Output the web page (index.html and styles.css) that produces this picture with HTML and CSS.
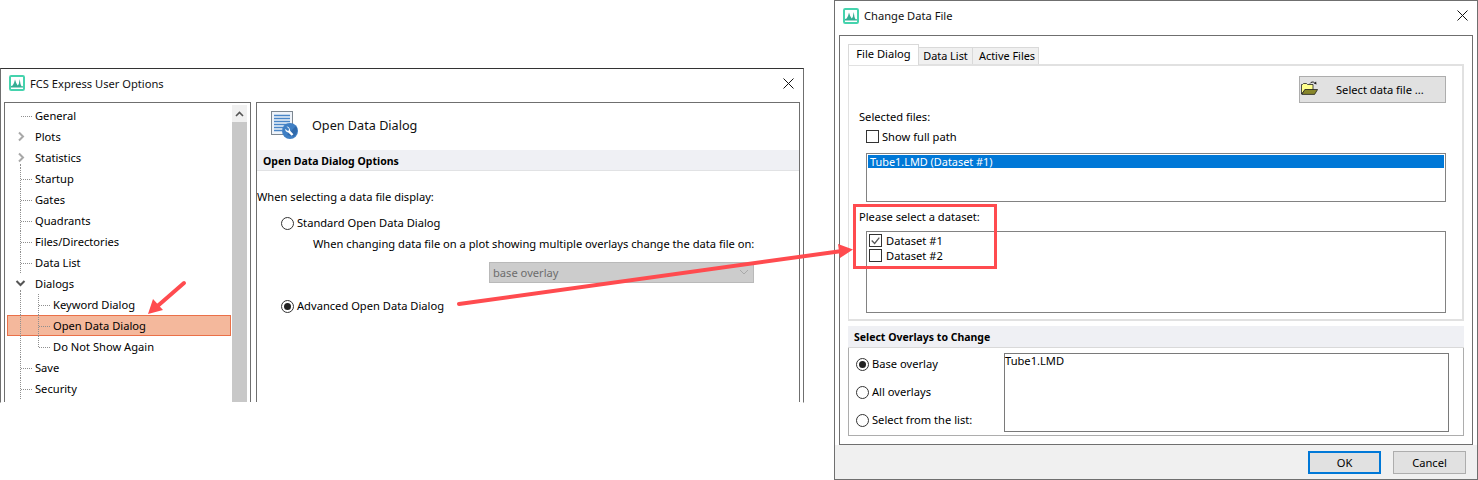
FILE: index.html
```html
<!DOCTYPE html>
<html lang="en">
<head>
<meta charset="utf-8">
<title>FCS Express dialogs</title>
<link rel="stylesheet" href="styles.css">
</head>
<body>
<div class="stage">
  <section class="window options-window">
    <header class="titlebar">
      <svg class="logo" viewBox="0 0 16 16"><rect x="1" y="1" width="14" height="14" rx="1.2" fill="#fff" stroke="#45d3ad" stroke-width="2"/><path d="M2 12.500h12v-1.300h-1.500L11.500 9 10.700 4 9.800 9 8.700 10.500 7.200 8 6 4.500 5 8 3.600 10.500 2 11z" fill="#35ad93"/></svg>
      <span class="title">FCS Express User Options</span>
      <svg class="close" viewBox="0 0 11 11"><path d="M.5.5l10 10M10.500.5l-10 10" stroke="#111" fill="none"/></svg>
    </header>
    <div class="options-body">
      <nav class="tree">
        <ul class="tree-list">
          <li class="row"><i class="v v-lower"></i><i class="h"></i><span>General</span></li>
          <li class="row"><svg class="exp" viewBox="0 0 9 11"><path d="M2 1.500l4 4-4 4" stroke="#a8a8a8" stroke-width="2" fill="none"/></svg><span>Plots</span></li>
          <li class="row"><svg class="exp" viewBox="0 0 9 11"><path d="M2 1.500l4 4-4 4" stroke="#a8a8a8" stroke-width="2" fill="none"/></svg><i class="v v-stat"></i><span>Statistics</span></li>
          <li class="row"><i class="v"></i><i class="h"></i><span>Startup</span></li>
          <li class="row"><i class="v"></i><i class="h"></i><span>Gates</span></li>
          <li class="row"><i class="v"></i><i class="h"></i><span>Quadrants</span></li>
          <li class="row"><i class="v"></i><i class="h"></i><span>Files/Directories</span></li>
          <li class="row"><i class="v v-last"></i><i class="h"></i><span>Data List</span></li>
          <li class="row"><svg class="exp exp-open" viewBox="0 0 11 9"><path d="M1.500 2l4 4 4-4" stroke="#555" stroke-width="2" fill="none"/></svg><i class="v v-dial"></i><span>Dialogs</span></li>
          <li class="row child"><i class="v"></i><i class="v2 v2-top"></i><i class="h h2"></i><span>Keyword Dialog</span></li>
          <li class="row child selected"><i class="v"></i><i class="v2"></i><i class="h h2"></i><span>Open Data Dialog</span></li>
          <li class="row child"><i class="v"></i><i class="v2 v2-end"></i><i class="h h2"></i><span>Do Not Show Again</span></li>
          <li class="row"><i class="v"></i><i class="h"></i><span>Save</span></li>
          <li class="row"><i class="v"></i><i class="h"></i><span>Security</span></li>
        </ul>
        <div class="scrollbar">
          <div class="scroll-btn"><svg viewBox="0 0 9 6" class="scroll-up"><path d="M1 5l3.500-3.500L8 5" stroke="#555" stroke-width="1.600" fill="none"/></svg></div>
        </div>
      </nav>
      <main class="panel">
        <div class="panel-head">
          <svg class="doc-icon" viewBox="0 0 27 28">
            <rect x="0.5" y="0.5" width="21" height="23" fill="#eef3fa" stroke="#7d8791"/>
            <path d="M3 4.500h16M3 7.500h16M3 10.500h16M3 13.500h16M3 16.500h10M3 19.500h8" stroke="#4a86c8" stroke-width="1.600"/>
            <circle cx="19" cy="20" r="8" fill="#3f7fc4"/>
            <path d="M23 25.500A8 8 0 0 0 25 15L16 24z" fill="#2f69ab"/>
            <path d="M15.500 15.500l2.300 2 .2 2-1.700 .3-2-2c-.3 2 1 3.600 3 3.700l3.400 3.300 1.700-1.600-3.300-3.400c.2-2.300-1.600-4.300-3.600-4.300z" fill="#fff"/>
          </svg>
          <span class="panel-title">Open Data Dialog</span>
        </div>
        <h2 class="section-bar">Open Data Dialog Options</h2>
        <p class="lead">When selecting a data file display:</p>
        <label class="radio-line std"><i class="radio"></i>Standard Open Data Dialog</label>
        <p class="sub">When changing data file on a plot showing multiple overlays change the data file on:</p>
        <div class="combo"><span>base overlay</span><svg class="combo-arrow" viewBox="0 0 10 6"><path d="M1 1l4 4 4-4" stroke="#a9a9a9" fill="none"/></svg></div>
        <label class="radio-line adv"><i class="radio on"></i>Advanced Open Data Dialog</label>
      </main>
    </div>
  </section>

  <section class="window change-window">
    <header class="titlebar titlebar-b">
      <svg class="logo" viewBox="0 0 16 16"><rect x="1" y="1" width="14" height="14" rx="1.2" fill="#fff" stroke="#45d3ad" stroke-width="2"/><path d="M2 12.500h12v-1.300h-1.500L11.500 9 10.700 4 9.800 9 8.700 10.500 7.200 8 6 4.500 5 8 3.600 10.500 2 11z" fill="#35ad93"/></svg>
      <span class="title">Change Data File</span>
      <svg class="close" viewBox="0 0 11 11"><path d="M.5.5l10 10M10.500.5l-10 10" stroke="#111" fill="none"/></svg>
    </header>
    <div class="main-box">
      <div class="tabs">
        <span class="tab active">File Dialog</span>
        <span class="tab">Data List</span>
        <span class="tab">Active Files</span>
      </div>
      <div class="tab-pane">
        <div class="btn-row">
          <button class="file-btn" type="button">
            <svg class="folder" viewBox="0 0 17 14"><path d="M.5 13V3.500h1l1-1h3l1 1h5.500v5.500H4L.5 13z" fill="#ffff8c" stroke="#222" stroke-width=".8"/><path d="M.8 13.400l3-4.900h12.800l-3 4.900z" fill="#87862a" stroke="#222" stroke-width=".8"/><path d="M9 2.500c1-1.600 3-2 4.600-.8" stroke="#222" fill="none"/><path d="M15.500 3.500l-.4-3-2.300 2z" fill="#222"/></svg>
            <span>Select data file ...</span>
          </button>
        </div>
        <p class="pane-label selected-label">Selected files:</p>
        <label class="check-line path-line"><i class="check"></i>Show full path</label>
        <div class="listbox files"><div class="list-sel">Tube1.LMD (Dataset #1)</div></div>
        <p class="pane-label dataset-label">Please select a dataset:</p>
        <div class="listbox datasets">
          <label class="check-line ds"><i class="check"><svg viewBox="0 0 13 13"><path d="M2 6.500l3.500 3.500 5.500-7" stroke="#555" stroke-width="1.500" fill="none"/></svg></i>Dataset #1</label>
          <label class="check-line ds"><i class="check"></i>Dataset #2</label>
        </div>
      </div>
      <h2 class="section-bar overlay-bar">Select Overlays to Change</h2>
      <div class="overlay-box">
        <div class="overlay-radios">
          <label class="radio-line"><i class="radio on"></i>Base overlay</label>
          <label class="radio-line"><i class="radio"></i>All overlays</label>
          <label class="radio-line"><i class="radio"></i>Select from the list:</label>
        </div>
        <div class="overlay-list">Tube1.LMD</div>
      </div>
    </div>
    <footer class="footer">
      <button class="dlg-btn default" type="button">OK</button>
      <button class="dlg-btn" type="button">Cancel</button>
    </footer>
  </section>

  <div class="red-box"></div>
  <svg class="arrows" viewBox="0 0 1478 480">
    <path d="M459 304L842 251" stroke="#ff4b4f" stroke-width="4" stroke-linecap="round" fill="none"/>
    <path d="M838 244L853 249.500 840 258z" fill="#ff4b4f"/>
    <path d="M184 283L153 310" stroke="#ff4b4f" stroke-width="4" stroke-linecap="round" fill="none"/>
    <path d="M148 314L153 299 163 310z" fill="#ff4b4f"/>
  </svg>
</div>
</body>
</html>
```
FILE: styles.css
```css
* { box-sizing: border-box; }
html, body { margin: 0; padding: 0; background: #fff; }
body { font-family: "Noto Sans", "Open Sans", sans-serif; font-size: 11.15px; color: #000; }
p, h2, ul { margin: 0; padding: 0; }
ul { list-style: none; }
i { font-style: normal; }

.stage { position: relative; width: 1478px; height: 480px; overflow: hidden; }

.window { position: absolute; background: #fff; display: flex; flex-direction: column; border: 1px solid #6f6f6f; }
.options-window { left: 0; top: 68px; width: 804px; height: 335px; border-top-color: #333; border-bottom: 1px solid #fff; overflow: hidden; }
.change-window { left: 834px; top: 0; width: 644px; height: 480px; }

.titlebar { height: 33px; flex: none; display: flex; align-items: center; padding: 0 0 5px 8px; }
.titlebar-b { height: 34px; padding-bottom: 5px; }
.logo { width: 16px; height: 16px; flex: none; margin-right: 5px; }
.title { font-size: 11.15px; flex: 1; color: #111; line-height: 16px; padding-top: 1px; }
.close { width: 11px; height: 11px; margin-right: 9px; flex: none; }

.options-body { flex: 1; min-height: 0; display: flex; gap: 5px; padding-left: 3px; padding-right: 3px; }
.tree { width: 247px; height: 320px; flex: none; border: 1px solid #6f6f6f; padding: 2px 2px 0 2px; display: flex; }
.tree-list { width: 225px; flex: none; }
.row { position: relative; height: 21px; line-height: 22px; padding-left: 28px; white-space: nowrap; }
.row.child { padding-left: 46px; }
.row span { position: relative; }
.row.selected { background: #f4b89c; outline: 1px solid #ea7048; outline-offset: -1px; width: 224px; }
.v { position: absolute; left: 13px; top: 0; bottom: 0; border-left: 1px dotted #8f8f8f; }
.v-lower { top: 11px; bottom: 10px; }
.v-stat { top: 17px; bottom: 0; }
.v-dial { top: 17px; bottom: 0; }
.v-last { bottom: 0; }
.h { position: absolute; left: 14px; width: 11px; top: 11px; border-top: 1px dotted #8f8f8f; }
.h2 { left: 32px; }
.v2 { position: absolute; left: 31px; top: 0; bottom: 0; border-left: 1px dotted #8f8f8f; }
.v2-top { top: 0; }
.v2-end { bottom: 10px; }
.exp { position: absolute; left: 10px; top: 5px; width: 9px; height: 11px; }
.exp-open { left: 8px; top: 6px; width: 11px; height: 9px; }

.scrollbar { width: 15px; flex: none; background: #c8c8c8; }
.scroll-btn { height: 17px; background: #f0f0f0; display: flex; align-items: center; justify-content: center; }
.scroll-up { width: 9px; height: 6px; }

.panel { width: 544px; flex: none; height: 320px; border: 1px solid #6f6f6f; }
.panel-head { height: 47px; display: flex; align-items: center; padding: 0 0 4px 14px; }
.doc-icon { width: 27px; height: 28px; margin-right: 14px; flex: none; }
.panel-title { font-size: 12.65px; color: #111; }
.section-bar { height: 21px; line-height: 22px; background: #eff0f4; border-bottom: 1px solid #e1e2e4; font-size: 10.5px; font-weight: 700; padding-left: 6px; }
.lead { margin-top: 17px; line-height: 18px; }
.radio-line { display: flex; align-items: center; line-height: 16px; }
.radio { width: 13px; height: 13px; border: 1px solid #333; border-radius: 50%; flex: none; margin-right: 3px; background: #fff; display: flex; align-items: center; justify-content: center; }
.radio.on::after { content: ""; width: 7px; height: 7px; border-radius: 50%; background: #222; }
.std { margin: 9px 0 0 24px; }
.sub { margin: 5px 0 0 56px; line-height: 16px; white-space: nowrap; }
.combo { margin: 10px 0 0 232px; width: 265px; height: 21px; background: #ccc; border: 1px solid #b9b9b9; color: #6d6d6d; display: flex; align-items: center; justify-content: space-between; padding: 0 4px 1px 3px; }
.combo-arrow { width: 10px; height: 6px; }
.adv { margin: 15px 0 0 24px; }

.main-box { margin: 0 0 0 4px; width: 634px; height: 410px; border: 1px solid #6f6f6f; padding: 8px 0 0 8px; flex: none; }
.tabs { display: flex; height: 20px; align-items: flex-end; }
.tab { height: 17px; line-height: 16px; padding: 0 4px; background: #f0f0f0; border: 1px solid #d9d9d9; border-bottom: 0; border-left: 0; width: 54px; text-align: center; white-space: nowrap; font-size: 10.9px; }
.tab:last-child { width: 66px; padding-left: 6px; }
.tab.active { height: 21px; margin-bottom: -1px; width: 71px; background: #fff; border: 1px solid #d9d9d9; border-bottom: 0; line-height: 18px; position: relative; z-index: 1; font-size: 11.15px; }
.tab-pane { width: 616px; height: 257px; border: 2px solid #e1e1e1; border-left-width: 1px; padding: 10px 16px 0 17px; background: #fff; }
.btn-row { display: flex; justify-content: flex-end; }
.file-btn { width: 147px; height: 27px; background: #e1e1e1; border: 1px solid #adadad; padding: 0 0 0 1px; font: inherit; display: flex; align-items: center; }
.folder { width: 17px; height: 14px; flex: none; margin-top: -3px; }
.file-btn span { margin-left: 18px; }
.pane-label { line-height: 16px; margin-left: -7px; }
.selected-label { margin-top: 6px; }
.check-line { display: flex; align-items: center; line-height: 15px; }
.check { width: 13px; height: 13px; border: 1px solid #333; flex: none; margin-right: 3px; display: block; background: #fff; }
.check svg { display: block; width: 11px; height: 11px; }
.path-line { margin-top: 4px; }
.listbox { width: 580px; border: 1px solid #828282; background: #fff; }
.files { height: 49px; margin-top: 9px; padding: 1px; }
.list-sel { height: 13px; line-height: 13px; background: #0078d7; color: #fff; padding-left: 2px; width: 576px; font-size: 10.9px; }
.dataset-label { margin-top: 7px; }
.datasets { height: 82px; margin-top: 6px; padding: 1px 0 0 2px; }
.ds { height: 15px; }
.ds .check { margin-right: 4px; }
.overlay-bar { width: 616px; margin-top: 5px; height: 22px; border-bottom: 1px solid #d9d9d9; }
.overlay-box { width: 616px; height: 88px; border: 1px solid #adadad; border-top: 0; display: flex; padding: 5px 14px 0 7px; }
.overlay-radios { width: 148px; flex: none; display: flex; flex-direction: column; padding-top: 3px; gap: 12px; }
.overlay-list { flex: 1; height: 79px; border: 1px solid #7a7a7a; line-height: 14px; }

.footer { flex: 1; background: #f0f0f0; display: flex; justify-content: flex-end; gap: 12px; padding: 6px 11px 0 0; }
.dlg-btn { width: 73px; height: 23px; background: #e1e1e1; border: 1px solid #adadad; padding: 0; font: inherit; }
.dlg-btn.default { border: 2px solid #0078d7; }

.red-box { position: absolute; left: 853px; top: 204px; width: 144px; height: 65px; border: 3px solid #ff4b4f; }
.arrows { position: absolute; left: 0; top: 0; width: 1478px; height: 480px; pointer-events: none; }
```
